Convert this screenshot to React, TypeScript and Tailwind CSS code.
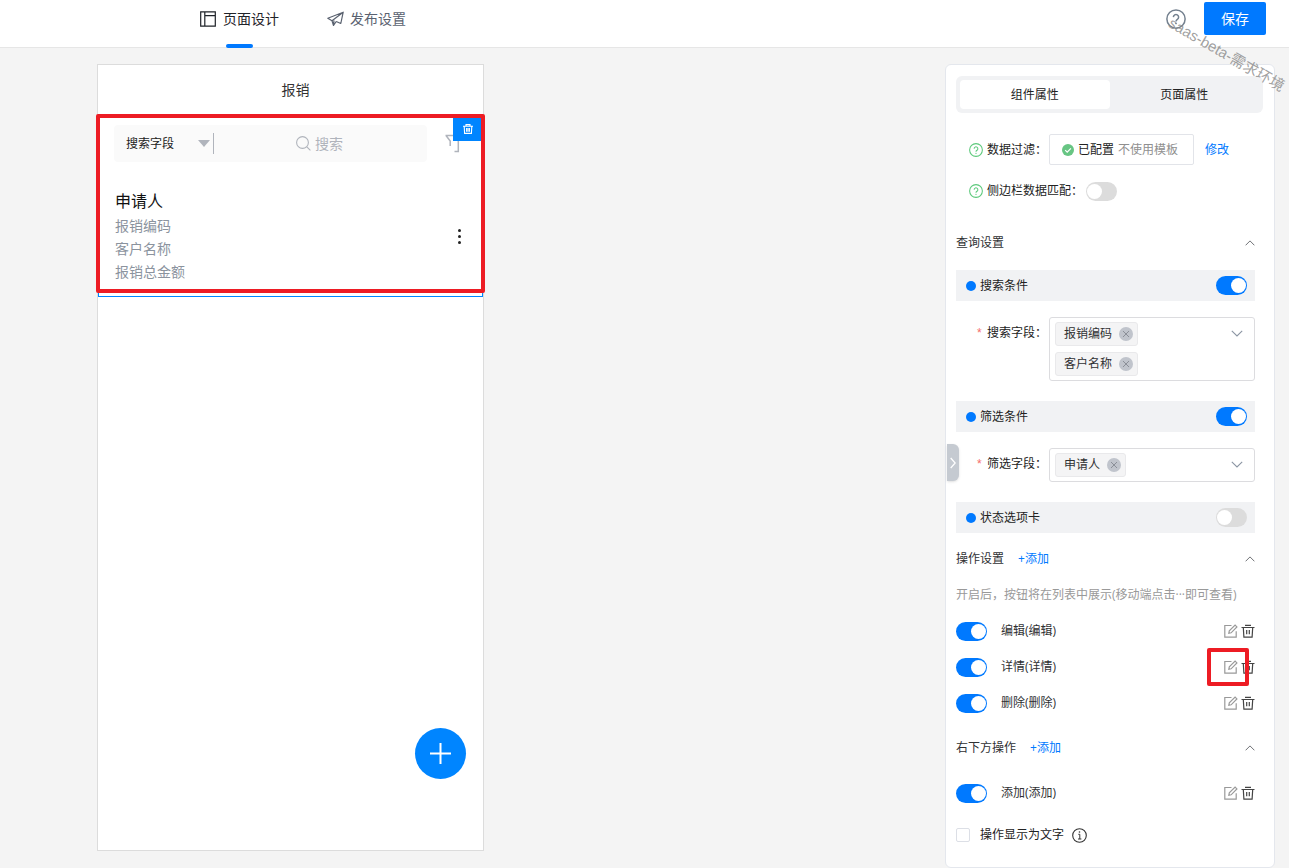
import { useState, type ReactNode } from "react";

const ITEM_FIELDS = ["报销编码", "客户名称", "报销总金额"];

const LIST_ACTIONS = [
  { name: "编辑", marked: false },
  { name: "详情", marked: true },
  { name: "删除", marked: false },
];

function PageIcon() {
  return (
    <svg viewBox="0 0 16 16" className="size-4" fill="none" stroke="currentColor" strokeWidth="1.2" aria-hidden="true">
      <path d="M.7 .9h14.6v14.2H.7zM4.8 .9v14.2M4.8 4.6h10.5" />
    </svg>
  );
}

function PlaneIcon() {
  return (
    <svg viewBox="0 0 17 16" className="h-4 w-[17px]" fill="none" stroke="currentColor" strokeWidth="1.2" strokeLinejoin="round" aria-hidden="true">
      <path d="M16.2 1.2.8 7.2l4.2 2.6L16.2 1.2l-2.4 11.3-4.6-2M5 9.800l1.500 4.700 2.700-4M6.500 14.500l.5-5" />
    </svg>
  );
}

function QuestionIcon({ className }: { className: string }) {
  return (
    <svg viewBox="0 0 16 16" className={className} fill="none" stroke="currentColor" aria-hidden="true">
      <circle cx="8" cy="8" r="7.3" strokeWidth="1.2" />
      <path d="M5.9 6.5a2.1 2.1 0 1 1 3.2 1.8C8.3 8.8 8 9.1 8 9.9" strokeWidth="1.2" />
      <circle cx="8" cy="11.7" r=".35" fill="currentColor" strokeWidth=".7" />
    </svg>
  );
}

function InfoIcon() {
  return (
    <svg viewBox="0 0 15 15" className="size-[15px]" fill="none" stroke="currentColor" aria-hidden="true">
      <circle cx="7.5" cy="7.5" r="6.8" strokeWidth="1.1" />
      <path d="M6.3 6.3h1.5V11M6 11h3.4" strokeWidth="1" />
      <circle cx="7.5" cy="4" r=".8" fill="currentColor" stroke="none" />
    </svg>
  );
}

function CheckIcon() {
  return (
    <svg viewBox="0 0 12 12" className="size-3" aria-hidden="true">
      <circle cx="6" cy="6" r="6" fill="#67c583" />
      <path d="m3.2 6.2 2 2 3.7-3.9" fill="none" stroke="#fff" strokeWidth="1.2" />
    </svg>
  );
}

function ChevronUp() {
  return (
    <svg viewBox="0 0 10 6" className="h-[6px] w-[10px]" fill="none" stroke="#606266" strokeWidth=".9" aria-hidden="true">
      <path d="m.6 5.3 4.400-4.400 4.400 4.400" />
    </svg>
  );
}

function ChevronDown() {
  return (
    <svg viewBox="0 0 12 7" className="h-[7px] w-3" fill="none" stroke="#8b95a3" strokeWidth="1.1" aria-hidden="true">
      <path d="M.8.8 6 6 11.2.8" />
    </svg>
  );
}

function EditIcon() {
  return (
    <svg viewBox="0 0 14 14" className="size-[14px]" fill="none" stroke="currentColor" strokeWidth="1.2" aria-hidden="true">
      <path d="M7.500 1.500H.8v11.700h11.400V7.200" />
      <path d="M4.800 9.300l.5-2.400 5.800-5.800 1.800 1.800-5.800 5.900z" />
    </svg>
  );
}

function TrashIcon() {
  return (
    <svg viewBox="0 0 14 14" className="size-[14px]" fill="none" stroke="currentColor" strokeWidth="1.2" aria-hidden="true">
      <path d="M.5 3.500h13M4 1.300h6M2.300 3.500l.6 9.700h8.200l.6-9.700M5.700 6v4.200M8.300 6v4.200" />
    </svg>
  );
}

function Switch({ label, on, className = "" }: { label: string; on: boolean; className?: string }) {
  return (
    <input
      type="checkbox"
      role="switch"
      aria-label={label}
      defaultChecked={on}
      className={`relative h-[19px] w-[31px] shrink-0 cursor-pointer appearance-none rounded-full bg-[#dcdcdc] before:absolute before:top-[2px] before:left-[1px] before:size-[15px] before:rounded-full before:bg-white checked:bg-[#0079ff] checked:before:left-[15px] ${className}`}
    />
  );
}

function SectionTitle({ title, addable = false }: { title: string; addable?: boolean }) {
  return (
    <div className="flex h-5 items-center">
      <h2 className="text-[#303133]">{title}</h2>
      {addable && (
        <button type="button" className="ml-[14px] text-[#0079ff]">
          +添加
        </button>
      )}
      <button type="button" aria-label={`收起${title}`} className="ml-auto">
        <ChevronUp />
      </button>
    </div>
  );
}

function ConditionBar({ title, on }: { title: string; on: boolean }) {
  return (
    <div className="flex h-[31px] items-center bg-[#f1f2f4] pr-2 pl-[10px]">
      <span className="mr-1 size-[10px] rounded-full bg-[#0079ff]" />
      <span>{title}</span>
      <Switch label={title} on={on} className="ml-auto" />
    </div>
  );
}

function TagField({ label, tags }: { label: string; tags: string[] }) {
  return (
    <div className="flex items-start">
      <div className="flex h-8 w-[93px] shrink-0 items-center pl-[21px]">
        <span className="w-[10px] font-['Liberation_Sans',sans-serif] text-[#f56c6c]">*</span>
        <span>{label}：</span>
      </div>
      <div className="flex min-w-0 flex-1 items-start justify-between rounded-[3px] border border-[#dcdcdf] bg-white py-1 pr-[11px] pl-[5px]">
        <ul className="flex flex-col items-start gap-[6px]">
          {tags.map((tag) => (
            <li
              key={tag}
              className="flex h-6 items-center gap-[7px] rounded-[3px] border border-[#e9e9eb] bg-[#f4f4f5] pr-1 pl-2 text-[#303133]"
            >
              {tag}
              <button
                type="button"
                aria-label={`移除${tag}`}
                className="flex size-[14px] items-center justify-center rounded-full bg-[#c0c4cc]"
              >
                <svg viewBox="0 0 8 8" className="size-2" stroke="#848992" strokeWidth=".9" aria-hidden="true">
                  <path d="m1 1 6 6M7 1 1 7" />
                </svg>
              </button>
            </li>
          ))}
        </ul>
        <button type="button" aria-label={`选择${label}`} className="flex h-[23px] items-center">
          <ChevronDown />
        </button>
      </div>
    </div>
  );
}

function ActionRow({ name, marked = false }: { name: string; marked?: boolean }) {
  return (
    <div className="flex h-9 items-center">
      <Switch label={name} on />
      <span className="ml-[14px] text-[#303133]">
        {name}({name})
      </span>
      <div className="ml-auto flex items-center gap-[3px]">
        <button type="button" aria-label={`编辑${name}`} className="relative text-[#999]">
          <EditIcon />
          {marked && (
            <span className="absolute -top-3 -left-[17px] z-10 h-[38px] w-[42px] rounded-[2px] border-4 border-[#ed1c24]" />
          )}
        </button>
        <button type="button" aria-label={`删除${name}`} className="text-[#444]">
          <TrashIcon />
        </button>
      </div>
    </div>
  );
}

function FilterRow({ label, children }: { label: string; children: ReactNode }) {
  return (
    <div className="flex items-center pl-[13px]">
      <QuestionIcon className="mr-1 size-[14px] shrink-0 text-[#5cc97b]" />
      <span>{label}：</span>
      {children}
    </div>
  );
}

function Header() {
  return (
    <header className="flex h-12 shrink-0 items-start border-b border-[#e6e6e6] bg-white pr-[23px] pl-[200px] text-sm leading-5">
      <nav className="flex gap-12">
        <a href="#design" className="flex h-12 flex-col items-center justify-between pt-[9px] text-[#1f2329]">
          <span className="flex h-5 items-center gap-[7px]">
            <PageIcon />
            页面设计
          </span>
          <span className="h-1 w-[27px] rounded-full bg-[#0079ff]" />
        </a>
        <a href="#publish" className="flex h-[29px] items-end text-[#5a6270]">
          <span className="flex h-5 items-center gap-[6px]">
            <PlaneIcon />
            发布设置
          </span>
        </a>
      </nav>
      <div className="ml-auto flex items-center gap-[18px] pt-[2px]">
        <button type="button" aria-label="帮助" className="relative text-[#74818f]">
          <QuestionIcon className="size-5" />
          <span className="pointer-events-none absolute top-[3px] left-1 z-20 origin-left rotate-30 font-['Liberation_Sans','Noto_Sans_CJK_SC',sans-serif] text-[15px] leading-5 whitespace-nowrap text-[#888]/80">
            saas-beta-需求环境
          </span>
        </button>
        <button type="button" className="h-[33px] w-[62px] rounded-[2px] bg-[#0079ff] text-white">
          保存
        </button>
      </div>
    </header>
  );
}

function ListComponent() {
  return (
    <div className="relative border border-[#0085ff] pb-[13px]">
      <div className="flex items-center pt-[9px] pl-[15px]">
        <div className="flex h-[37px] w-[313px] items-center rounded bg-[#fafafa] pl-3 text-xs">
          <div className="flex h-[21px] w-[88px] items-center border-r border-[#b0b4bc] pr-[3px]">
            <select aria-label="搜索字段" className="min-w-0 flex-1 appearance-none bg-transparent text-[#222]">
              <option>搜索字段</option>
            </select>
            <span className="border-x-[6px] border-t-[7px] border-x-transparent border-t-[#b0b4bc]" />
          </div>
          <label className="flex flex-1 items-center justify-center gap-1 text-sm text-[#b0b4bc]">
            <svg viewBox="0 0 15 15" className="size-[15px]" fill="none" stroke="currentColor" strokeWidth="1.1" aria-hidden="true">
              <circle cx="6.5" cy="6.5" r="5.9" />
              <path d="m10.8 10.8 3.6 3.6" />
            </svg>
            <input
              type="text"
              aria-label="搜索"
              placeholder="搜索"
              className="w-[30px] bg-transparent outline-none placeholder:text-[#b0b4bc]"
            />
          </label>
        </div>
        <svg viewBox="0 0 18 20" className="ml-[18px] h-5 w-[18px]" fill="none" stroke="#b0b4bc" strokeWidth="1.5" aria-hidden="true">
          <path d="M.5 1.500H17l-3.700 5.600v10.500H9.500M1 1.500l4.200 5.600v5" />
        </svg>
      </div>

      <div className="flex items-center justify-between pt-[27px] pr-[17px] pl-4">
        <div>
          <h3 className="mb-px text-base leading-6 text-[#111]">申请人</h3>
          {ITEM_FIELDS.map((field) => (
            <p key={field} className="text-sm leading-[23px] text-[#8b939e]">
              {field}
            </p>
          ))}
        </div>
        <button type="button" aria-label="更多操作" className="flex flex-col gap-[3px] px-1">
          <span className="size-[3px] rounded-full bg-[#222]" />
          <span className="size-[3px] rounded-full bg-[#222]" />
          <span className="size-[3px] rounded-full bg-[#222]" />
        </button>
      </div>

      <button
        type="button"
        aria-label="删除组件"
        className="absolute top-px right-0 flex h-6 w-[29px] items-center justify-center bg-[#0085ff] text-white"
      >
        <svg viewBox="0 0 10 10" className="size-[10px]" fill="none" stroke="currentColor" strokeWidth="1.1" aria-hidden="true">
          <path d="M0 2.2h10M3 2V.6h4V2M1.2 2.2l.4 7.200h6.800l.4-7.200M3.600 4v3.700M5 4v3.700M6.400 4v3.700" />
        </svg>
      </button>
      <span className="pointer-events-none absolute -top-[2px] -right-[3px] bottom-[3px] -left-[3px] z-10 rounded-[2px] border-4 border-[#ed1c24]" />
    </div>
  );
}

function PhonePreview() {
  return (
    <main className="relative mb-[17px] w-[387px] shrink-0 border border-[#dcdcdc] bg-white">
      <h1 className="flex h-[50px] items-center justify-center pl-[10px] text-sm text-[#333]">报销</h1>
      <ListComponent />
      <button
        type="button"
        aria-label="添加"
        className="absolute right-[17px] bottom-[71px] flex size-[51px] items-center justify-center rounded-full bg-[#0085ff]"
      >
        <svg viewBox="0 0 21 21" className="size-[21px]" stroke="#fff" strokeWidth="2" aria-hidden="true">
          <path d="M10.500 0v21M0 10.500h21" />
        </svg>
      </button>
    </main>
  );
}

function PropertyPanel() {
  const [tab, setTab] = useState("组件属性");

  return (
    <aside className="relative w-[330px] shrink-0 rounded-md border border-[#e4e7ed] bg-white pt-[11px] pl-[10px] text-xs leading-5 text-[#222]">
      <div role="tablist" className="mr-[11px] flex h-[37px] rounded-md bg-[#f1f2f4] p-1">
        {["组件属性", "页面属性"].map((name) => (
          <button
            key={name}
            type="button"
            role="tab"
            aria-selected={tab === name}
            onClick={() => setTab(name)}
            className="flex-1 rounded aria-selected:bg-white"
          >
            {name}
          </button>
        ))}
      </div>

      <div className="mr-[19px] flex flex-col">
        <div className="mt-[21px]">
          <FilterRow label="数据过滤">
            <div className="ml-[2px] flex h-[31px] w-[145px] items-center gap-1 rounded-[2px] border border-[#e2e4e9] pl-3">
              <CheckIcon />
              <span>已配置</span>
              <span className="text-[#8f8f8f]">不使用模板</span>
            </div>
            <button type="button" className="ml-[11px] text-[#0079ff]">
              修改
            </button>
          </FilterRow>
        </div>
        <div className="mt-4">
          <FilterRow label="侧边栏数据匹配">
            <Switch label="侧边栏数据匹配" on={false} className="ml-[3px]" />
          </FilterRow>
        </div>

        <div className="mt-8">
          <SectionTitle title="查询设置" />
        </div>
        <div className="mt-[17px] flex flex-col">
          <ConditionBar title="搜索条件" on />
          <div className="mt-4 mb-5">
            <TagField label="搜索字段" tags={["报销编码", "客户名称"]} />
          </div>
          <ConditionBar title="筛选条件" on />
          <div className="mt-4 mb-5">
            <TagField label="筛选字段" tags={["申请人"]} />
          </div>
          <ConditionBar title="状态选项卡" on={false} />
        </div>

        <div className="mt-4">
          <SectionTitle title="操作设置" addable />
        </div>
        <p className="mt-4 mb-2 whitespace-nowrap text-[#999]">
          开启后，按钮将在列表中展示(移动端点击···即可查看)
        </p>
        {LIST_ACTIONS.map((action) => (
          <ActionRow key={action.name} name={action.name} marked={action.marked} />
        ))}

        <div className="my-[17px]">
          <SectionTitle title="右下方操作" addable />
        </div>
        <ActionRow name="添加" />
        <div className="mt-[14px] flex h-5 items-center">
          <label className="flex items-center gap-[10px]">
            <input
              type="checkbox"
              className="size-[14px] appearance-none rounded-[2px] border border-[#dcdfe6] bg-white checked:bg-[#0079ff]"
            />
            操作显示为文字
          </label>
          <button type="button" aria-label="说明" className="ml-2 text-[#333]">
            <InfoIcon />
          </button>
        </div>
      </div>

      <button
        type="button"
        aria-label="收起面板"
        className="absolute top-[379px] left-px flex h-[37px] w-3 items-center justify-center rounded-r-md bg-[#c5cad1] shadow-sm"
      >
        <svg viewBox="0 0 6 12" className="h-3 w-[6px]" fill="none" stroke="#fff" strokeWidth="1.3" aria-hidden="true">
          <path d="m.7 1 4.500 5-4.500 5" />
        </svg>
      </button>
    </aside>
  );
}

export default function App() {
  return (
    <div className="flex min-h-screen flex-col bg-[#f4f4f4] font-['Open_Sans','Noto_Sans_CJK_SC',sans-serif]">
      <Header />
      <div className="flex flex-1 justify-between gap-6 pt-4 pr-[14px] pl-[97px]">
        <PhonePreview />
        <PropertyPanel />
      </div>
    </div>
  );
}
